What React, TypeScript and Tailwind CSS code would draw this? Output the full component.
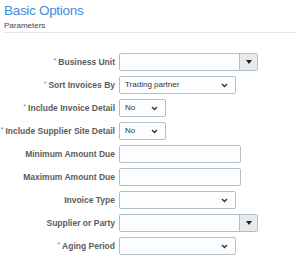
import React from 'react';

type Field = {
  label: string;
  required?: boolean;
  kind: 'text' | 'select' | 'lov';
  width: string;
  value?: string;
};

const fields: Field[] = [
  { label: 'Business Unit', required: true, kind: 'lov', width: 'w-[139px]' },
  { label: 'Sort Invoices By', required: true, kind: 'select', width: 'w-[117px]', value: 'Trading partner' },
  { label: 'Include Invoice Detail', required: true, kind: 'select', width: 'w-[47px]', value: 'No' },
  { label: 'Include Supplier Site Detail', required: true, kind: 'select', width: 'w-[47px]', value: 'No' },
  { label: 'Minimum Amount Due', kind: 'text', width: 'w-[122px]' },
  { label: 'Maximum Amount Due', kind: 'text', width: 'w-[122px]' },
  { label: 'Invoice Type', kind: 'select', width: 'w-[117px]' },
  { label: 'Supplier or Party', kind: 'lov', width: 'w-[139px]' },
  { label: 'Aging Period', required: true, kind: 'select', width: 'w-[117px]' },
];

const Chevron = () => (
  <svg width="7" height="5" viewBox="0 0 7 5" className="shrink-0">
    <path d="M1 1 L3.5 3.5 L6 1" fill="none" stroke="#333" strokeWidth="1.4" />
  </svg>
);

const Control: React.FC<{ f: Field }> = ({ f }) => {
  if (f.kind === 'lov') {
    return (
      <div className={`${f.width} h-[18px] flex border border-[#b3bec7] rounded-[2px] bg-[#fcfdfe]`}>
        <div className="flex-1" />
        <div className="w-[18px] border-l border-[#b3bec7] bg-[#e8ebee] flex items-center justify-center">
          <svg width="6" height="4" viewBox="0 0 6 4">
            <path d="M0 0 H6 L3 4 Z" fill="#222" />
          </svg>
        </div>
      </div>
    );
  }
  if (f.kind === 'select') {
    return (
      <div className={`${f.width} h-[18px] flex items-center justify-between pl-[5px] pr-[7px] border border-[#b3bec7] rounded-[2px] bg-[#fcfdfe] text-[8px] text-[#333]`}>
        <span>{f.value ?? ''}</span>
        <Chevron />
      </div>
    );
  }
  return <div className={`${f.width} h-[18px] border border-[#b3bec7] rounded-[2px] bg-[#fcfdfe]`} />;
};

export default function App() {
  return (
    <div className="w-[300px] h-[266px] bg-white font-['Liberation_Sans',Arial,sans-serif] overflow-hidden">
      <div className="pl-[4px] pr-[4px]">
        <div className="pt-[3px] h-[21px] text-[13.5px] leading-[16px] text-[#3b8ddb] tracking-[-0.3px]">Basic Options</div>
        <div className="h-[12px] text-[8px] leading-[10px] text-[#444] border-b border-[#e6e6e6]">Parameters</div>
      </div>
      <div className="mt-[20px] flex flex-col gap-[5px]">
        {fields.map((f) => (
          <div key={f.label} className="flex items-center h-[18px]">
            <div className="w-[115px] text-right text-[8.5px] font-bold text-[#5c5c5c] whitespace-nowrap">
              {f.required && <span className="text-[#4f8fd6] font-normal align-top text-[7px] mr-[2px]">*</span>}
              {f.label}
            </div>
            <div className="ml-[4px]">
              <Control f={f} />
            </div>
          </div>
        ))}
      </div>
    </div>
  );
}
